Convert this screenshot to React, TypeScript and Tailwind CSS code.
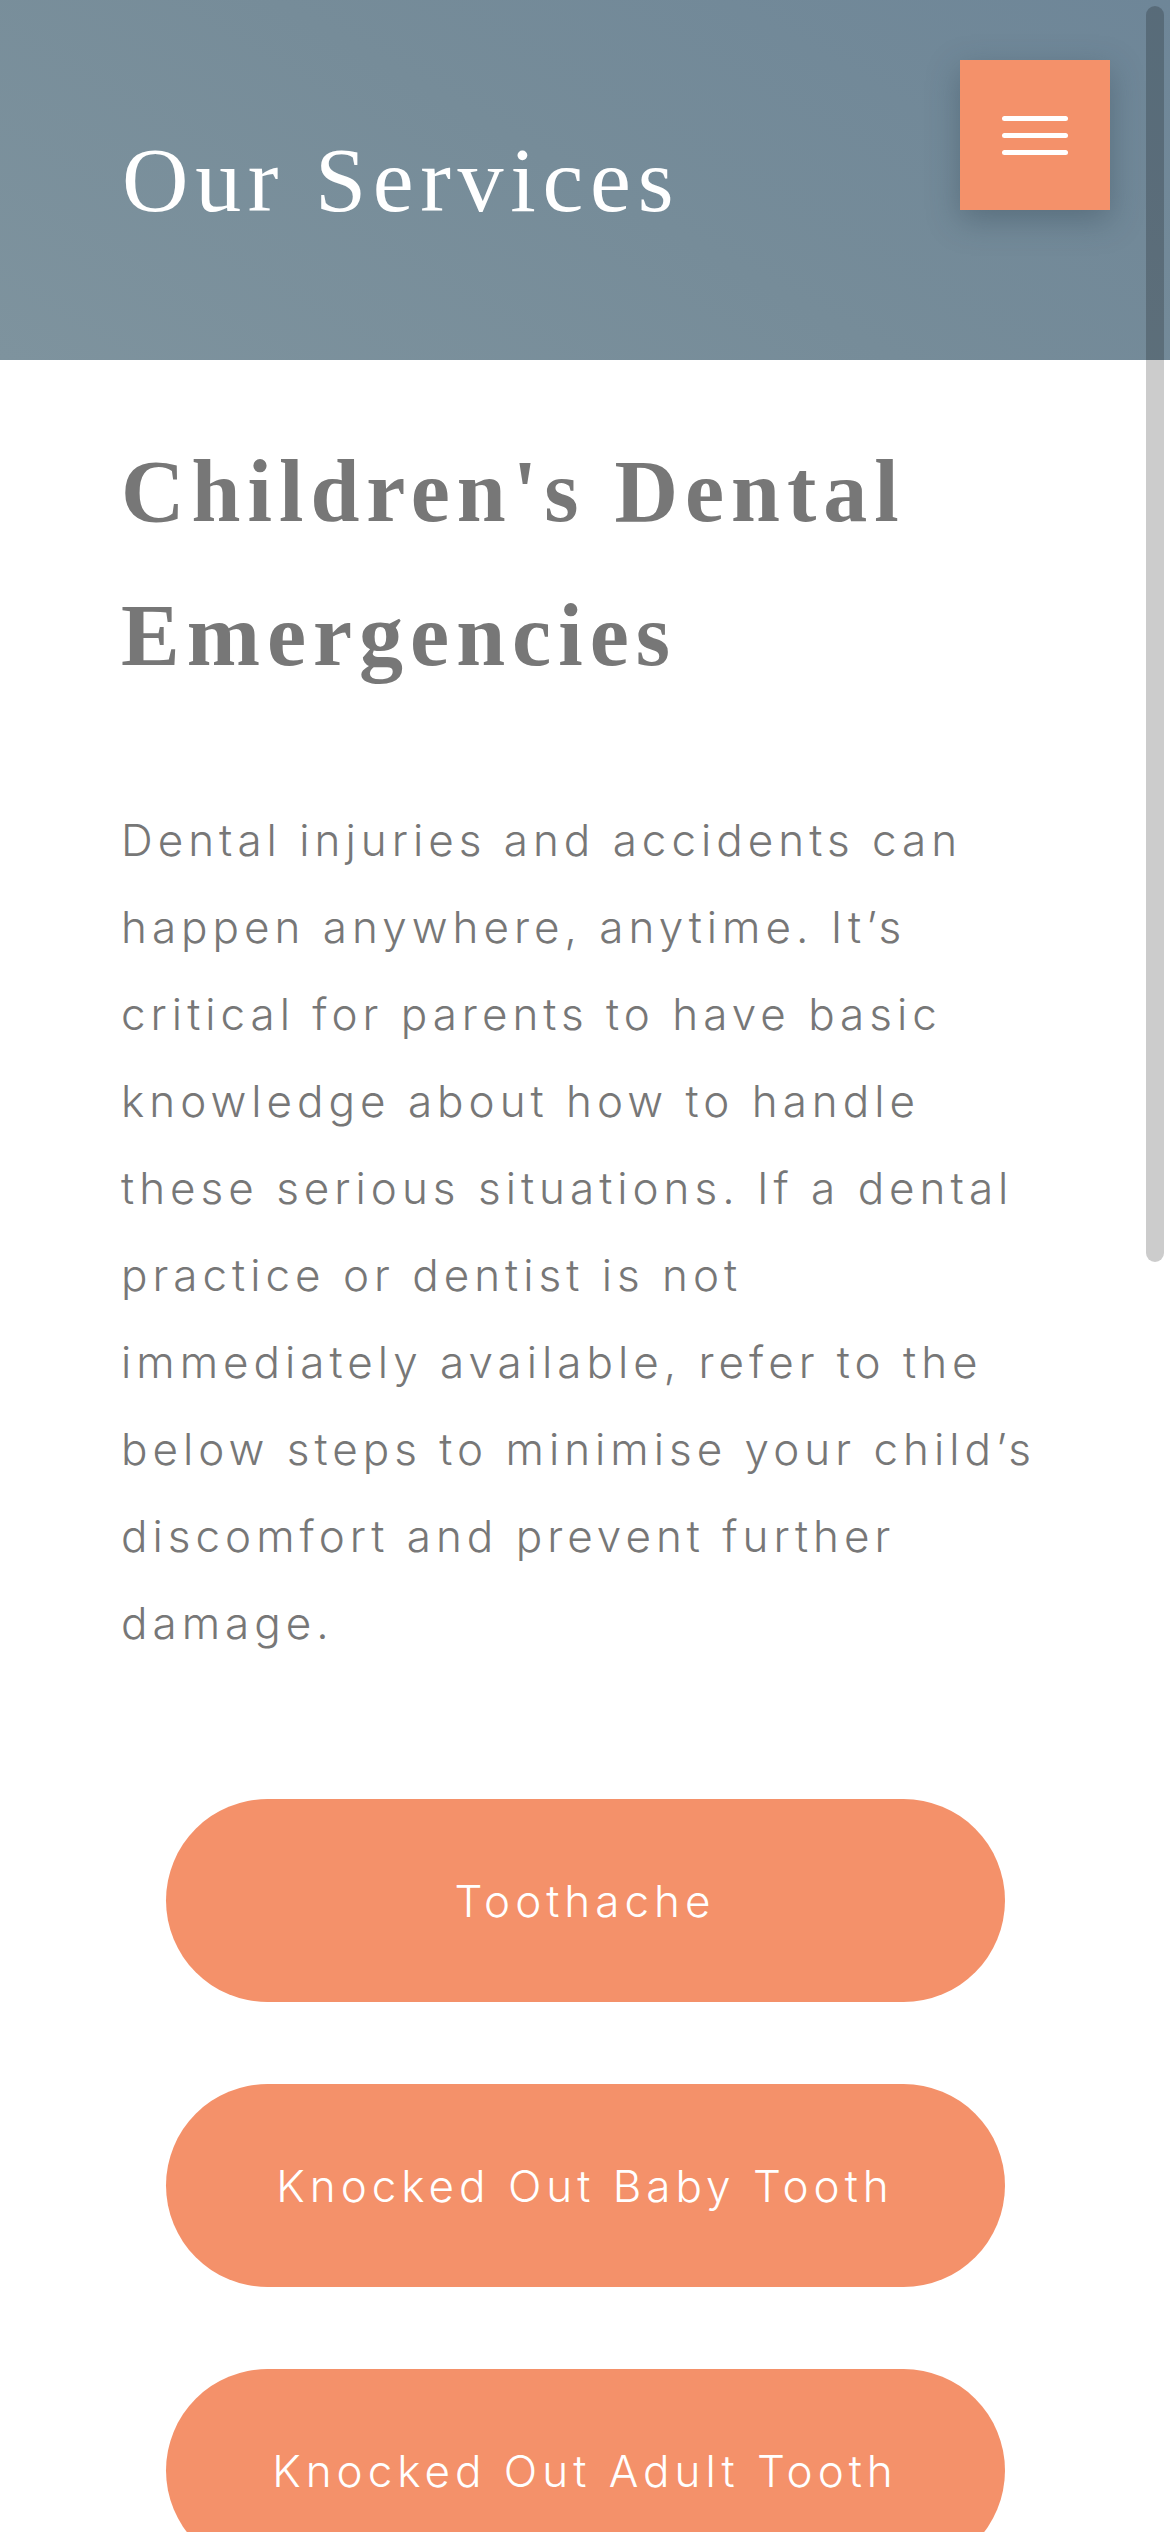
const body = [
  "Dental injuries and accidents can",
  "happen anywhere, anytime. It’s",
  "critical for parents to have basic",
  "knowledge about how to handle",
  "these serious situations. If a dental",
  "practice or dentist is not",
  "immediately available, refer to the",
  "below steps to minimise your child’s",
  "discomfort and prevent further",
  "damage.",
];

const links = ["Toothache", "Knocked Out Baby Tooth", "Knocked Out Adult Tooth"];

function MenuButton() {
  return (
    <button className="absolute top-[60px] right-[60px] w-[150px] h-[150px] bg-[#f4916a] flex flex-col items-center justify-center gap-[12px] shadow-[0_10px_30px_rgba(40,60,75,0.35)]">
      <span className="block w-[66px] h-[5px] rounded-full bg-white" />
      <span className="block w-[66px] h-[5px] rounded-full bg-white" />
      <span className="block w-[66px] h-[5px] rounded-full bg-white" />
    </button>
  );
}

export default function App() {
  return (
    <div className="relative min-h-[2532px] bg-white overflow-hidden">
      <header className="relative h-[360px] flex items-center px-[122px] bg-[linear-gradient(30deg,#7e939e_0%,#768c99_50%,#6e8698_100%)]">
        <h1 className="text-white text-[92px] leading-none tracking-[6.7px] font-['Liberation_Serif',serif] font-normal">
          Our Services
        </h1>
        <MenuButton />
      </header>

      <main className="px-[121px]">
        <h2 className="mt-[60px] text-[#777777] text-[88px] leading-[144px] tracking-[7px] font-bold font-['Liberation_Serif',serif]">
          Children's Dental
          <br />
          Emergencies
        </h2>

        <p className="mt-[89px] text-[#777777] text-[44px] leading-[87px] tracking-[5px] font-light font-['Inter',sans-serif] whitespace-nowrap">
          {body.map((line, i) => (
            <span key={i} className="block">
              {line}
            </span>
          ))}
        </p>
      </main>

      <div className="mt-[132px] flex flex-col items-center gap-[82px] pb-[100px]">
        {links.map((label) => (
          <a
            key={label}
            className="w-[839px] h-[203px] rounded-full bg-[#f4916a] flex items-center justify-center text-white text-[44px] tracking-[5px] font-light font-['Inter',sans-serif]"
          >
            {label}
          </a>
        ))}
      </div>

      {/* overlay scrollbar */}
      <div className="absolute top-[6px] right-[6px] w-[18px] h-[1256px] rounded-full bg-black/20" />
    </div>
  );
}
